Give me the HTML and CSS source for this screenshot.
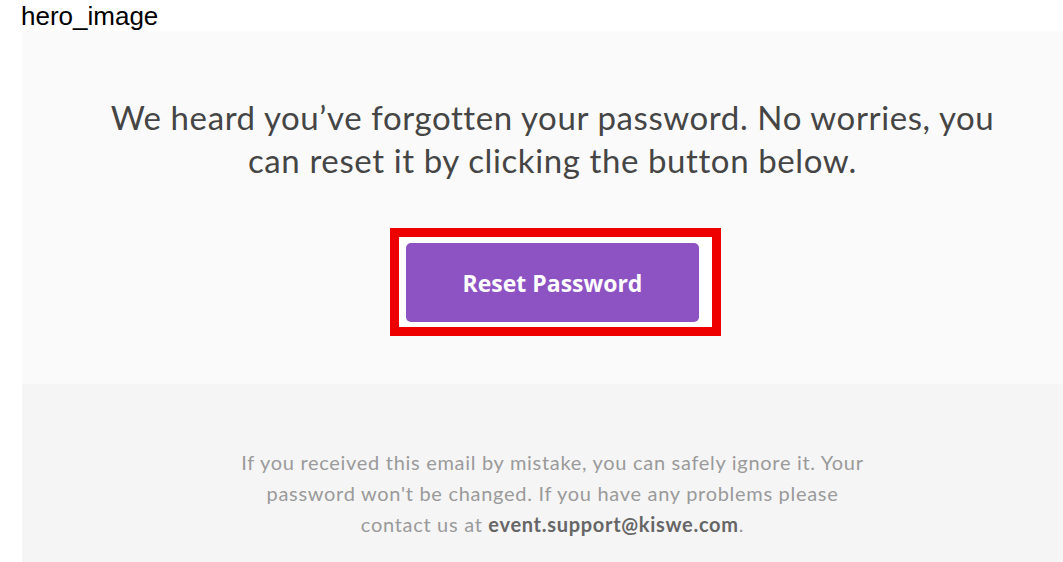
FILE: index.html
```html
<!DOCTYPE html>
<html>
<head>
<meta charset="utf-8">
<link rel="stylesheet" href="styles.css">
</head>
<body>
<div class="label">hero_image</div>
<div class="email">
  <section class="hero">
    <p class="lead">We heard you’ve forgotten your password. No worries, you can reset it by clicking the button below.</p>
    <div class="highlight">
      <a class="btn">Reset Password</a>
    </div>
  </section>
  <section class="foot">
    <p class="note">If you received this email by mistake, you can safely ignore it. Your password won't be changed. If you have any problems please contact us at <b>event.support@kiswe.com</b>.</p>
  </section>
</div>
</body>
</html>
```
FILE: styles.css
```css
html { overflow: hidden; }
body {
  margin: 0;
  background: #fff;
  width: 1063px;
  height: 562px;
  overflow: hidden;
}
.label {
  font-family: "Liberation Sans", Arial, sans-serif;
  font-size: 26px;
  color: #000;
  padding: 2px 0 0 21px;
  height: 29px;
  line-height: 28px;
}
.email {
  margin-left: 22px;
  width: 1061px;
}
.hero {
  background: #fafafa;
  height: 353px;
  display: flex;
  flex-direction: column;
  align-items: center;
  padding-top: 65px;
  box-sizing: border-box;
}
.lead {
  margin: 0;
  width: 900px;
  text-align: center;
  font-family: Lato, sans-serif;
  font-size: 33px;
  letter-spacing: 0.6px;
  line-height: 43px;
  color: #454545;
}
.highlight {
  margin-top: 46px;
  margin-left: 6px;
  border: 9px solid #ee0000;
  background: #fff;
  padding: 6px 13px 5px 7px;
}
.btn {
  display: flex;
  align-items: center;
  justify-content: center;
  width: 293px;
  height: 79px;
  background: #8e53c3;
  border-radius: 5px;
  color: #fff;
  font-family: "Open Sans", sans-serif;
  font-weight: 700;
  font-size: 23px;
}
.foot {
  background: #f5f5f5;
  height: 200px;
  padding-top: 63px;
  box-sizing: border-box;
  display: flex;
  justify-content: center;
}
.note {
  margin: 0;
  width: 640px;
  text-align: center;
  font-family: Lato, sans-serif;
  font-size: 20px;
  letter-spacing: 0.7px;
  line-height: 31px;
  color: #9a9a9a;
}
.note b {
  color: #666;
  font-weight: 700;
}
```
